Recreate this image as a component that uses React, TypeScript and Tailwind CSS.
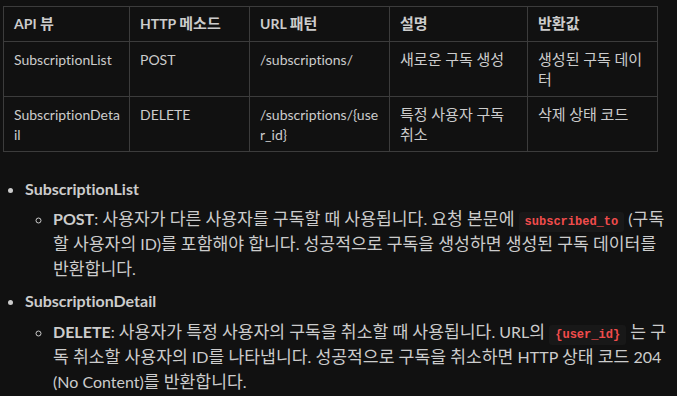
import React from "react";

const rows = [
  ["SubscriptionList", "POST", "/subscriptions/", "새로운 구독 생성", "생성된 구독 데이터"],
  ["SubscriptionDetail", "DELETE", "/subscriptions/{user_id}", "특정 사용자 구독 취소", "삭제 상태 코드"],
];

const heads = ["API 뷰", "HTTP 메소드", "URL 패턴", "설명", "반환값"];
const widths = ["w-[126px]", "w-[120px]", "w-[140px]", "w-[138px]", "w-[130px]"];

// hangul in the CJK font runs a bit narrow next to the latin text, so bump it up
function Ko({ t }: { t: string }) {
  return (
    <>
      {t.split(/([\uAC00-\uD7A3]+)/).map((s, i) =>
        i % 2 ? (
          <span key={i} className="text-[1.075em] leading-none">
            {s}
          </span>
        ) : (
          s
        ),
      )}
    </>
  );
}

function Code({ children }: { children: React.ReactNode }) {
  return (
    <code className="rounded-[3px] bg-[#181818] px-[6px] py-[3px] font-['Liberation_Mono',monospace] text-[12px] leading-none font-bold text-[#f14c4c]">
      {children}
    </code>
  );
}

export default function App() {
  return (
    <div className="min-h-[396px] bg-[#111111] pl-[3px] pt-[6px] pr-[4px] font-['Lato','Noto_Sans_CJK_KR',sans-serif] text-[16px] text-[#cccccc] [font-variant-ligatures:none]">
      <table className="table-fixed border-collapse text-[14px]">
        <thead>
          <tr className="h-[35px]">
            {heads.map((h, i) => (
              <th key={h} className={`${widths[i]} border border-[#3c3c3c] px-[10px] text-left leading-[20px] font-bold`}>
                <Ko t={h} />
              </th>
            ))}
          </tr>
        </thead>
        <tbody>
          {rows.map((r) => (
            <tr key={r[0]} className="h-[55px]">
              {r.map((c, i) => (
                <td key={i} className="border border-[#3c3c3c] pl-[10px] pr-[8px] pt-[8px] pb-[6px] align-top leading-[20px] break-all">
                  <Ko t={c} />
                </td>
              ))}
            </tr>
          ))}
        </tbody>
      </table>

      <ul className="mt-[24px] list-disc pl-[22px] leading-[25px]">
        <li>
          <span className="font-bold">SubscriptionList</span>
          <ul className="mt-[5px] list-[circle] pl-[28px]">
            <li>
              <span className="font-bold">POST</span>
              <Ko t=": 사용자가 다른 사용자를 구독할 때 사용됩니다. 요청 본문에 " />
              <Code>subscribed_to</Code>
              <Ko t=" (구독할 사용자의 ID)를 포함해야 합니다. 성공적으로 구독을 생성하면 생성된 구독 데이터를 반환합니다." />
            </li>
          </ul>
        </li>
        <li className="mt-[7px]">
          <span className="font-bold">SubscriptionDetail</span>
          <ul className="mt-[6px] list-[circle] pl-[28px]">
            <li>
              <span className="font-bold">DELETE</span>
              <Ko t=": 사용자가 특정 사용자의 구독을 취소할 때 사용됩니다. URL의 " />
              <Code>{"{user_id}"}</Code>
              <Ko t=" 는 구독 취소할 사용자의 ID를 나타냅니다. 성공적으로 구독을 취소하면 HTTP 상태 코드 204 (No Content)를 반환합니다." />
            </li>
          </ul>
        </li>
      </ul>
    </div>
  );
}
